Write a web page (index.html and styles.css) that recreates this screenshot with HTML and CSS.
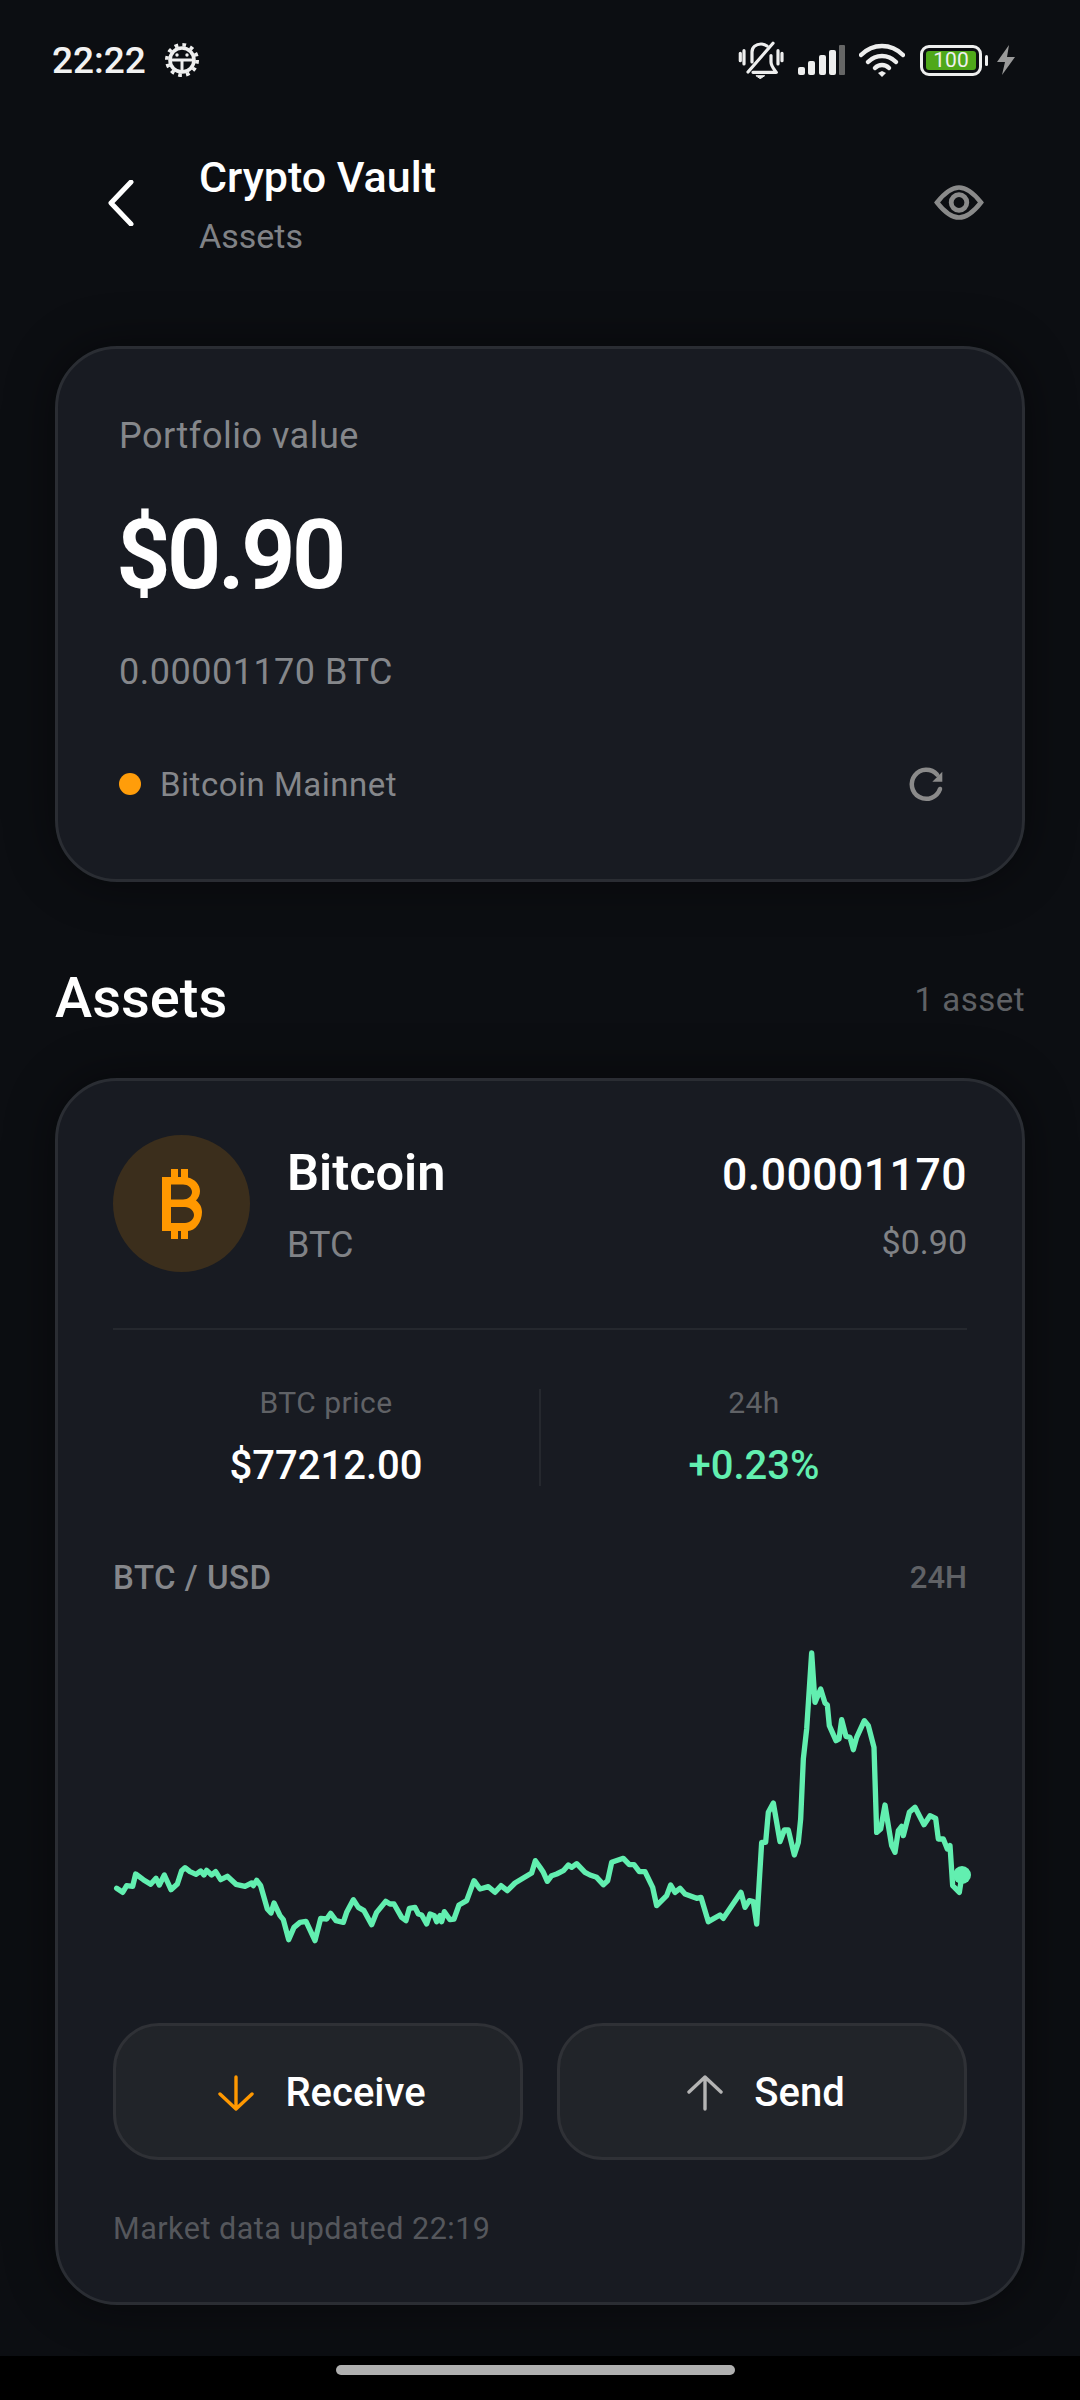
FILE: index.html
```html
<!DOCTYPE html>
<html lang="en">
<head>
    <meta charset="UTF-8">
    <meta name="viewport" content="width=device-width, initial-scale=1.0">
    <title>Crypto Vault</title>
    <link rel="stylesheet" href="styles.css">
</head>
<body>
    <div class="screen">
        <!-- Status bar -->
        <div class="status-bar">
            <span class="status-time">22:22</span>
            <svg class="status-gear" width="36" height="36" viewBox="0 0 36 36" fill="none" stroke="#eee">
                <circle cx="18" cy="18" r="12" stroke-width="3.6"/>
                <circle cx="18" cy="18" r="15.2" stroke-width="3.6" stroke-dasharray="3.7 4.25"/>
                <path d="M6 18H30M18 18V29" stroke-width="3"/>
                <circle cx="13" cy="13" r="1.7" fill="#eee" stroke="none"/>
                <circle cx="23" cy="13" r="1.7" fill="#eee" stroke="none"/>
            </svg>
            <div class="status-icons">
                <svg width="46" height="38" viewBox="0 0 46 38" fill="none" stroke="#eee" stroke-width="3.2" stroke-linecap="round" stroke-linejoin="round">
                    <path d="M14 21V11C14 6 18 3 23 3C25 3 27 3.5 29 5M33 14.500V21C33 25 36 28 38.300 31.300H15"/>
                    <path d="M10 31L35 2.300"/>
                    <path d="M2.300 12.300V19.700M6 9.700V23M40 9.700V23M44 12.300V19.700"/>
                    <path d="M18.300 34.700H26.700L22.500 37.500Z" fill="#eee" stroke-width="1"/>
                </svg>
                <svg class="status-signal" width="48" height="32" viewBox="0 0 48 32" fill="#eee">
                    <rect x="0" y="23" width="7" height="8" rx="2"/>
                    <rect x="10" y="17" width="7" height="14" rx="2"/>
                    <rect x="21" y="11" width="7" height="20" rx="2"/>
                    <rect x="31" y="6" width="7" height="25" rx="2"/>
                    <rect x="41" y="1" width="6" height="30" rx="1" fill="#666"/>
                </svg>
                <svg class="status-wifi" width="46" height="36" viewBox="0 0 46 36" fill="none" stroke="#eee" stroke-width="4.5" stroke-linecap="round">
                    <path d="M2 13C14 1 32 1 44 13"/>
                    <path d="M9 20C17 12 29 12 37 20"/>
                    <path d="M16 26C20 22 26 22 30 26" />
                    <path d="M19 31L23 35L27 31L23 29Z" fill="#eee" stroke="none"/>
                </svg>
                <div class="battery">
                    <div class="battery-body"><span class="battery-fill">100</span></div>
                    <div class="battery-nub"></div>
                </div>
                <svg class="status-bolt" width="20" height="30" viewBox="0 0 20 30" fill="#9a9a9a">
                    <path d="M13 0L1 17H9L6 30L19 12H11Z"/>
                </svg>
            </div>
        </div>

        <!-- Header -->
        <div class="header">
            <svg class="back-icon" width="26" height="46" viewBox="0 0 26 46" fill="none" stroke="#fff" stroke-width="5" stroke-linecap="round" stroke-linejoin="round">
                <path d="M23 2L3 23L23 44"/>
            </svg>
            <div class="header-text">
                <div class="header-title">Crypto Vault</div>
                <div class="header-sub">Assets</div>
            </div>
            <svg class="eye-icon" width="50" height="35" viewBox="0 0 50 35" fill="none" stroke="#8a8a8a" stroke-width="4.6">
                <path d="M3 17.500C12 6 19 2.500 25 2.500C31 2.500 38 6 47 17.500C38 29 31 32.500 25 32.500C19 32.500 12 29 3 17.500Z"/>
                <circle cx="25" cy="17.500" r="7.800" stroke-width="4.800"/>
            </svg>
        </div>

        <!-- Portfolio -->
        <div class="card portfolio">
            <div class="portfolio-label">Portfolio value</div>
            <div class="portfolio-value">$0.90</div>
            <div class="portfolio-sub">0.00001170 BTC</div>
            <div class="network-row">
                <span class="network-dot"></span>
                <span class="network-name">Bitcoin Mainnet</span>
                <svg class="refresh-icon" width="40" height="40" viewBox="0 0 40 40" fill="none" stroke="#8a8a8a" stroke-width="4.500" stroke-linecap="round">
                    <path d="M34 25A14.500 14.500 0 1 1 31 10.500"/>
                    <path d="M36.300 7.700V17.700H26.300Z" fill="#8a8a8a" stroke="none"/>
                </svg>
            </div>
        </div>

        <div class="section-head">
            <div class="section-title">Assets</div>
            <div class="section-count">1 asset</div>
        </div>

        <!-- Asset card -->
        <div class="card asset">
            <div class="coin-row">
                <div class="coin-badge">
                    <svg width="40" height="70" viewBox="0 0 40 70" fill="#ff9800" fill-rule="evenodd">
                        <path d="M0 8H9V0H16V8H19V0H26V8.500C33 10 38 16 38 22C38 26 36.500 29 34 31.500C37.500 34 40 38 40 43C40 53 33 62 26 62V70H19V62H16V70H9V62H0ZM9 15.500V30.500H21C26 30.500 30 27 30 23C30 19 26 15.500 21 15.500ZM9 38V54H23C28 54 32 50 32 46C32 42 28 38 23 38Z"/>
                    </svg>
                </div>
                <div class="coin-names">
                    <div class="coin-name">Bitcoin</div>
                    <div class="coin-symbol">BTC</div>
                </div>
                <div class="coin-amounts">
                    <div class="coin-amount">0.00001170</div>
                    <div class="coin-fiat">$0.90</div>
                </div>
            </div>

            <div class="divider"></div>

            <div class="stats">
                <div class="stat">
                    <div class="stat-label">BTC price</div>
                    <div class="stat-value">$77212.00</div>
                </div>
                <div class="stat-sep"></div>
                <div class="stat">
                    <div class="stat-label">24h</div>
                    <div class="stat-value stat-up">+0.23%</div>
                </div>
            </div>

            <div class="chart-head">
                <span class="chart-pair">BTC / USD</span>
                <span class="chart-range">24H</span>
            </div>

            <svg class="chart" width="854" height="340" viewBox="39 -30 2562 1020" fill="none">
                <polyline stroke="#62efb0" stroke-width="16" stroke-linejoin="round" stroke-linecap="round" points="50,778 68,790 80,770 98,772 107,735 130,752 152,766 168,748 178,768 193,738 213,782 232,765 245,725 255,716 270,728 288,736 302,726 312,738 320,724 335,738 347,728 362,752 382,742 408,766 435,772 455,762 460,770 470,754 482,770 502,840 513,852 522,822 540,860 550,872 566,932 582,895 600,880 618,877 645,935 662,868 680,870 692,853 708,875 730,880 740,850 760,812 775,835 792,845 815,887 830,850 857,817 870,825 882,825 905,865 918,875 928,838 945,835 955,855 965,858 980,885 990,855 1003,860 1010,878 1020,860 1025,878 1033,848 1050,872 1062,870 1077,828 1100,815 1122,755 1140,780 1165,773 1185,790 1203,770 1222,785 1245,762 1295,732 1306,695 1320,715 1330,730 1342,757 1355,740 1370,735 1390,725 1405,708 1415,715 1430,704 1455,730 1470,738 1490,745 1510,767 1523,755 1535,700 1570,688 1588,707 1602,707 1618,728 1635,728 1658,775 1670,830 1700,800 1712,768 1725,790 1740,778 1755,795 1790,808 1803,805 1825,878 1860,858 1870,868 1923,790 1935,835 1948,815 1960,818 1970,885 1985,640 1997,640 2005,550 2020,522 2040,638 2053,603 2065,603 2083,678 2095,640 2102,570 2110,390 2120,300 2135,72 2145,220 2162,180 2175,222 2182,228 2188,290 2208,335 2217,330 2225,272 2238,322 2250,325 2260,362 2270,325 2293,275 2305,290 2322,355 2330,610 2342,600 2355,528 2365,590 2375,650 2385,670 2395,605 2405,592 2410,620 2428,550 2445,535 2472,587 2490,560 2507,568 2515,630 2530,630 2542,660 2550,650 2558,770 2578,790 2586,738"/>
                <circle cx="2586" cy="738" r="27" fill="#62efb0"/>
            </svg>

            <div class="actions">
                <div class="action">
                    <svg width="36" height="36" viewBox="0 0 36 36" fill="none" stroke="#ff9800" stroke-width="3.400" stroke-linecap="round" stroke-linejoin="round">
                        <path d="M18 2V34M2 19L18 34L34 19"/>
                    </svg>
                    <span>Receive</span>
                </div>
                <div class="action">
                    <svg width="36" height="36" viewBox="0 0 36 36" fill="none" stroke="#b4b4b4" stroke-width="3.400" stroke-linecap="round" stroke-linejoin="round">
                        <path d="M18 34V2M2 17L18 2L34 17"/>
                    </svg>
                    <span>Send</span>
                </div>
            </div>

            <div class="market-note">Market data updated 22:19</div>
        </div>

        <!-- Gesture bar -->
        <div class="nav-bar"><div class="nav-pill"></div></div>
    </div>
</body>
</html>
```
FILE: styles.css
```css
/* Base */
* {
    box-sizing: border-box;
}

body {
    margin: 0;
    background: #000;
    font-family: Roboto, "Noto Sans", sans-serif;
    color: #fff;
}

.screen {
    width: 1080px;
    height: 2400px;
    background: #0c0e12;
    display: flex;
    flex-direction: column;
    overflow: hidden;
}

/* Status bar */
.status-bar {
    height: 120px;
    padding: 0 64px 0 52px;
    display: flex;
    align-items: center;
    flex: none;
}

.status-time {
    font-size: 37px;
    font-weight: 500;
    color: #f2f2f2;
}

.status-gear {
    margin-left: 18px;
}

.status-icons {
    margin-left: auto;
    display: flex;
    align-items: center;
}

.status-signal {
    margin-left: 14px;
}

.status-wifi {
    margin-left: 13px;
}

.battery {
    margin-left: 15px;
    display: flex;
    align-items: center;
}

.battery-body {
    width: 62px;
    height: 31px;
    border: 3px solid #eee;
    border-radius: 9px;
    padding: 3px;
    display: flex;
}

.battery-fill {
    flex: 1;
    background: #4fa81a;
    border-radius: 3px;
    color: #f0f0f0;
    font-size: 21px;
    line-height: 19px;
    text-align: center;
}

.battery-nub {
    width: 3px;
    height: 11px;
    margin-left: 3px;
    background: #eee;
    border-radius: 2px;
}

.status-bolt {
    margin-left: 8px;
}

/* Header */
.header {
    height: 166px;
    padding: 0 96px 0 108px;
    display: flex;
    align-items: center;
    flex: none;
}

.back-icon {
    flex: none;
}

.header-text {
    margin-left: 65px;
    margin-top: 7px;
}

.header-title {
    font-size: 43px;
    font-weight: 500;
    line-height: 46px;
}

.header-sub {
    margin-top: 13px;
    font-size: 34px;
    line-height: 46px;
    color: #808286;
}

.eye-icon {
    margin-left: auto;
    margin-top: -2px;
}

/* Cards */
.card {
    margin: 0 55px;
    background: #181b22;
    border: 3px solid #2a2d33;
    border-radius: 62px;
    box-shadow: 0 0 50px rgba(0, 0, 0, 0.45);
    flex: none;
}

.portfolio {
    margin-top: 60px;
    height: 536px;
    padding: 67px 61px 0;
}

.portfolio-label {
    font-size: 36px;
    line-height: 40px;
    color: #85878b;
    letter-spacing: 0.5px;
}

.portfolio-value {
    margin-top: 43px;
    margin-left: -3px;
    font-size: 96px;
    font-weight: 600;
    line-height: 112px;
    letter-spacing: -4px;
}

.portfolio-sub {
    margin-top: 41px;
    font-size: 36px;
    line-height: 40px;
    color: #85878b;
    letter-spacing: 0.5px;
}

.network-row {
    margin-top: 72px;
    height: 40px;
    display: flex;
    align-items: center;
}

.network-dot {
    width: 22px;
    height: 22px;
    border-radius: 50%;
    background: #ff9d0a;
}

.network-name {
    margin-left: 19px;
    font-size: 33px;
    color: #85878b;
    letter-spacing: 0.5px;
}

.refresh-icon {
    margin-left: auto;
    margin-right: 15px;
}

/* Section heading */
.section-head {
    margin: 86px 55px 50px;
    height: 60px;
    display: flex;
    align-items: center;
    justify-content: space-between;
    flex: none;
}

.section-title {
    font-size: 56px;
    font-weight: 500;
}

.section-count {
    margin-top: 2px;
    font-size: 33px;
    color: #5f6165;
    letter-spacing: 0.5px;
}

/* Asset card */
.asset {
    height: 1227px;
    padding: 54px 55px;
}

.coin-row {
    display: flex;
    align-items: center;
}

.coin-badge {
    width: 137px;
    height: 137px;
    border-radius: 50%;
    background: #3b2e1c;
    display: flex;
    align-items: center;
    justify-content: center;
    flex: none;
}

.coin-names {
    margin-left: 37px;
}

.coin-name {
    font-size: 50.5px;
    font-weight: 600;
    line-height: 60px;
}

.coin-symbol {
    margin-top: 22px;
    font-size: 36px;
    line-height: 40px;
    color: #808286;
}

.coin-amounts {
    margin-left: auto;
    text-align: right;
}

.coin-amount {
    font-size: 44.5px;
    font-weight: 500;
    line-height: 60px;
    letter-spacing: 0.5px;
}

.coin-fiat {
    margin-top: 17px;
    font-size: 34px;
    line-height: 40px;
    color: #808286;
}

.divider {
    margin-top: 56px;
    height: 2px;
    background: #25282e;
}

.stats {
    margin-top: 55px;
    display: grid;
    grid-template-columns: 1fr 2px 1fr;
    align-items: center;
}

.stat {
    text-align: center;
}

.stat-label {
    font-size: 30px;
    line-height: 36px;
    color: #606266;
    letter-spacing: 0.5px;
}

.stat-value {
    margin-top: 22px;
    font-size: 40px;
    font-weight: 500;
    line-height: 46px;
}

.stat-up {
    color: #62efb0;
}

.stat-sep {
    height: 97px;
    background: #25282e;
}

.chart-head {
    margin-top: 68px;
    height: 40px;
    display: flex;
    align-items: center;
    justify-content: space-between;
}

.chart-pair {
    font-size: 33px;
    font-weight: 500;
    color: #85878b;
    letter-spacing: 0.5px;
}

.chart-range {
    font-size: 31px;
    font-weight: 500;
    color: #606266;
}

.chart {
    display: block;
    margin-top: 22px;
    overflow: visible;
}

.actions {
    margin-top: 64px;
    display: grid;
    grid-template-columns: 1fr 1fr;
    gap: 34px;
}

.action {
    height: 137px;
    padding: 2px 0 0 8px;
    background: #212429;
    border: 3px solid #2f3136;
    border-radius: 46px;
    display: flex;
    align-items: center;
    justify-content: center;
    gap: 31px;
    font-size: 40px;
    font-weight: 500;
}

.market-note {
    margin-top: 49px;
    font-size: 30.5px;
    line-height: 40px;
    color: #55575c;
    letter-spacing: 0.5px;
}

/* Gesture bar */
.nav-bar {
    margin-top: auto;
    height: 44px;
    background: #000;
    display: flex;
    justify-content: center;
    align-items: center;
    flex: none;
}

.nav-pill {
    width: 399px;
    height: 10px;
    margin-left: -9px;
    margin-top: -17px;
    border-radius: 5px;
    background: #b0b0b0;
}
```
